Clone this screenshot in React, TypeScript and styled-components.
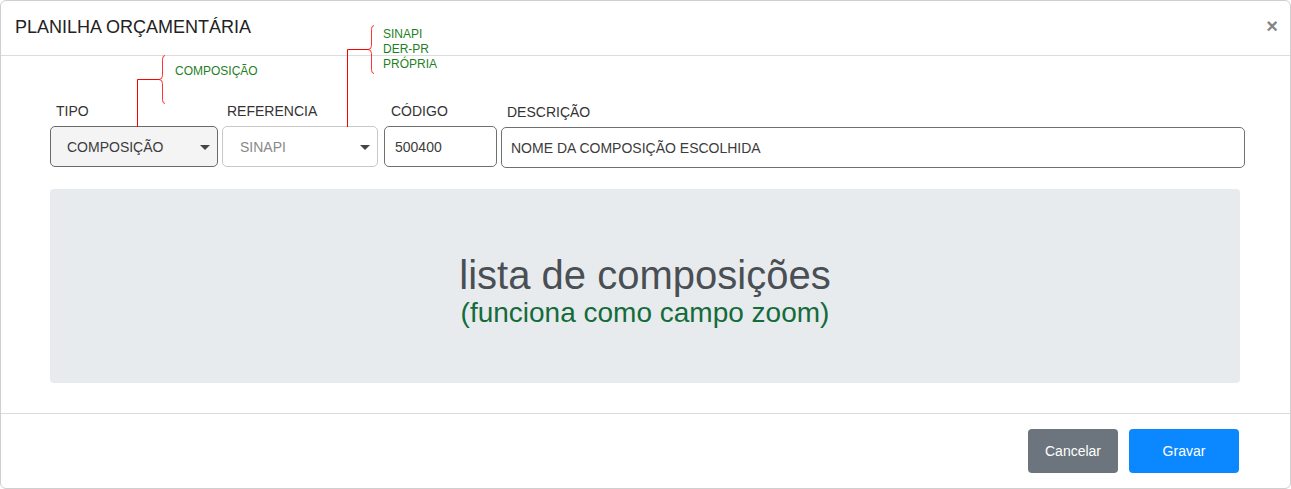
import React from "react";
import styled, { createGlobalStyle } from "styled-components";

const Global = createGlobalStyle`
  html, body { margin: 0; padding: 0; background: #fff; }
  body { font-family: "Liberation Sans", Arial, sans-serif; }
  * { box-sizing: border-box; }
`;

const Modal = styled.div`
  position: relative;
  width: 1291px;
  height: 489px;
  border: 1px solid #cfcfcf;
  border-radius: 6px;
  display: flex;
  flex-direction: column;
  background: #fff;
  overflow: hidden;
`;

const Header = styled.div`
  height: 55px;
  flex: none;
  display: flex;
  align-items: center;
  justify-content: space-between;
  padding: 0 12px 0 14px;
  border-bottom: 1px solid #dcdcdc;
`;

const Title = styled.h5`
  margin: 0;
  font-size: 18px;
  font-weight: 400;
  color: #222;
  line-height: 22px;
  margin-top: -2px;
`;

const Close = styled.button`
  border: 0;
  background: none;
  padding: 0;
  font-family: "Liberation Sans", Arial, sans-serif;
  font-size: 20px;
  font-weight: 700;
  line-height: 20px;
  color: #858585;
  margin-top: -4px;
  cursor: pointer;
`;

const Body = styled.div`
  flex: 1;
  padding: 45px 50px 30px 49px;
  display: flex;
  flex-direction: column;
`;

const FormRow = styled.div`
  display: flex;
  align-items: flex-start;
`;

const Field = styled.div<{ $w: number; $ml?: number; $dy?: number }>`
  flex: none;
  width: ${(p) => p.$w}px;
  margin-left: ${(p) => p.$ml ?? 0}px;
  margin-top: ${(p) => p.$dy ?? 0}px;
  display: flex;
  flex-direction: column;
`;

const Label = styled.label<{ $pl: number }>`
  font-size: 14px;
  line-height: 20px;
  color: #333;
  padding-left: ${(p) => p.$pl}px;
  margin-bottom: 5px;
`;

const Control = styled.div<{ $variant: "filled" | "muted" | "plain"; $pl: number; $h?: number }>`
  height: ${(p) => p.$h ?? 41}px;
  display: flex;
  align-items: center;
  justify-content: space-between;
  padding: 0 7px 0 ${(p) => p.$pl}px;
  border-radius: 5px;
  font-size: 14px;
  border: 1px solid
    ${(p) => (p.$variant === "muted" ? "#c8c8c8" : p.$variant === "filled" ? "#6a6a6a" : "#707070")};
  background: ${(p) => (p.$variant === "filled" ? "#f4f4f4" : "#fff")};
  color: ${(p) => (p.$variant === "muted" ? "#8a8a8a" : "#3c3c3c")};
`;

const Caret = styled.span`
  width: 0;
  height: 0;
  border-left: 5px solid transparent;
  border-right: 5px solid transparent;
  border-top: 5px solid #444;
  margin-top: 1px;
`;

const ListBox = styled.div`
  margin-top: 21px;
  height: 194px;
  background: #e8ebee;
  border-radius: 4px;
  display: flex;
  flex-direction: column;
  align-items: center;
  justify-content: center;
  padding-top: 10px;
`;

const ListTitle = styled.h1`
  margin: 0;
  font-size: 40px;
  font-weight: 400;
  line-height: 44px;
  color: #4a4f54;
`;

const ListHint = styled.div`
  font-size: 28px;
  line-height: 32px;
  color: #146c3a;
`;

const Footer = styled.div`
  flex: none;
  height: 75px;
  border-top: 1px solid #dcdcdc;
  display: flex;
  align-items: center;
  justify-content: flex-end;
  gap: 11px;
  padding: 0 51px 0 0;
`;

const Button = styled.button<{ $kind: "secondary" | "primary"; $w: number }>`
  width: ${(p) => p.$w}px;
  height: 44px;
  border: 0;
  border-radius: 4px;
  font-family: "Liberation Sans", Arial, sans-serif;
  font-size: 14px;
  color: #fff;
  background: ${(p) => (p.$kind === "primary" ? "#0b88ff" : "#6c757d")};
  cursor: pointer;
`;

const Overlay = styled.svg`
  position: absolute;
  left: 0;
  top: 0;
  pointer-events: none;
`;

const Note = styled.div<{ $x: number; $y: number }>`
  position: absolute;
  left: ${(p) => p.$x}px;
  top: ${(p) => p.$y}px;
  font-size: 12px;
  line-height: 15px;
  color: #1f7f24;
  pointer-events: none;
`;

const brace = (x: number, top: number, mid: number, bottom: number) => {
  const v = x + 3.5;
  return `M ${x + 6} ${top} Q ${v} ${top} ${v} ${top + 4} L ${v} ${mid - 4} Q ${v} ${mid} ${x} ${mid} Q ${v} ${mid} ${v} ${mid + 4} L ${v} ${bottom - 4} Q ${v} ${bottom} ${x + 6} ${bottom}`;
};

export default function App() {
  return (
    <>
      <Global />
      <Modal>
        <Header>
          <Title>PLANILHA ORÇAMENTÁRIA</Title>
          <Close aria-label="Fechar">×</Close>
        </Header>
        <Body>
          <FormRow>
            <Field $w={168}>
              <Label $pl={6}>TIPO</Label>
              <Control $variant="filled" $pl={16}>
                COMPOSIÇÃO
                <Caret />
              </Control>
            </Field>
            <Field $w={156} $ml={4}>
              <Label $pl={5}>REFERENCIA</Label>
              <Control $variant="muted" $pl={17}>
                SINAPI
                <Caret />
              </Control>
            </Field>
            <Field $w={113} $ml={6}>
              <Label $pl={7}>CÓDIGO</Label>
              <Control $variant="plain" $pl={10}>
                500400
              </Control>
            </Field>
            <Field $w={744} $ml={4} $dy={1}>
              <Label $pl={6}>DESCRIÇÃO</Label>
              <Control $variant="plain" $pl={9}>
                NOME DA COMPOSIÇÃO ESCOLHIDA
              </Control>
            </Field>
          </FormRow>
          <ListBox>
            <ListTitle>lista de composições</ListTitle>
            <ListHint>(funciona como campo zoom)</ListHint>
          </ListBox>
        </Body>
        <Footer>
          <Button $kind="secondary" $w={90}>Cancelar</Button>
          <Button $kind="primary" $w={110}>Gravar</Button>
        </Footer>

        <Overlay width="500" height="130" viewBox="0 0 500 130">
          <g fill="none" stroke="#ff0000" strokeWidth="1">
            <path d="M 136.5 126 L 136.5 78.5 L 158 78.5" />
            <path d={brace(158, 54.5, 78.5, 102.5)} strokeOpacity="0.8" />
            <path d="M 346.5 126 L 346.5 48.5 L 367 48.5" />
            <path d={brace(367, 24.5, 48.5, 72.5)} strokeOpacity="0.8" />
          </g>
        </Overlay>
        <Note $x={174} $y={63}>COMPOSIÇÃO</Note>
        <Note $x={382} $y={26}>
          SINAPI
          <br />
          DER-PR
          <br />
          PRÓPRIA
        </Note>
      </Modal>
    </>
  );
}
